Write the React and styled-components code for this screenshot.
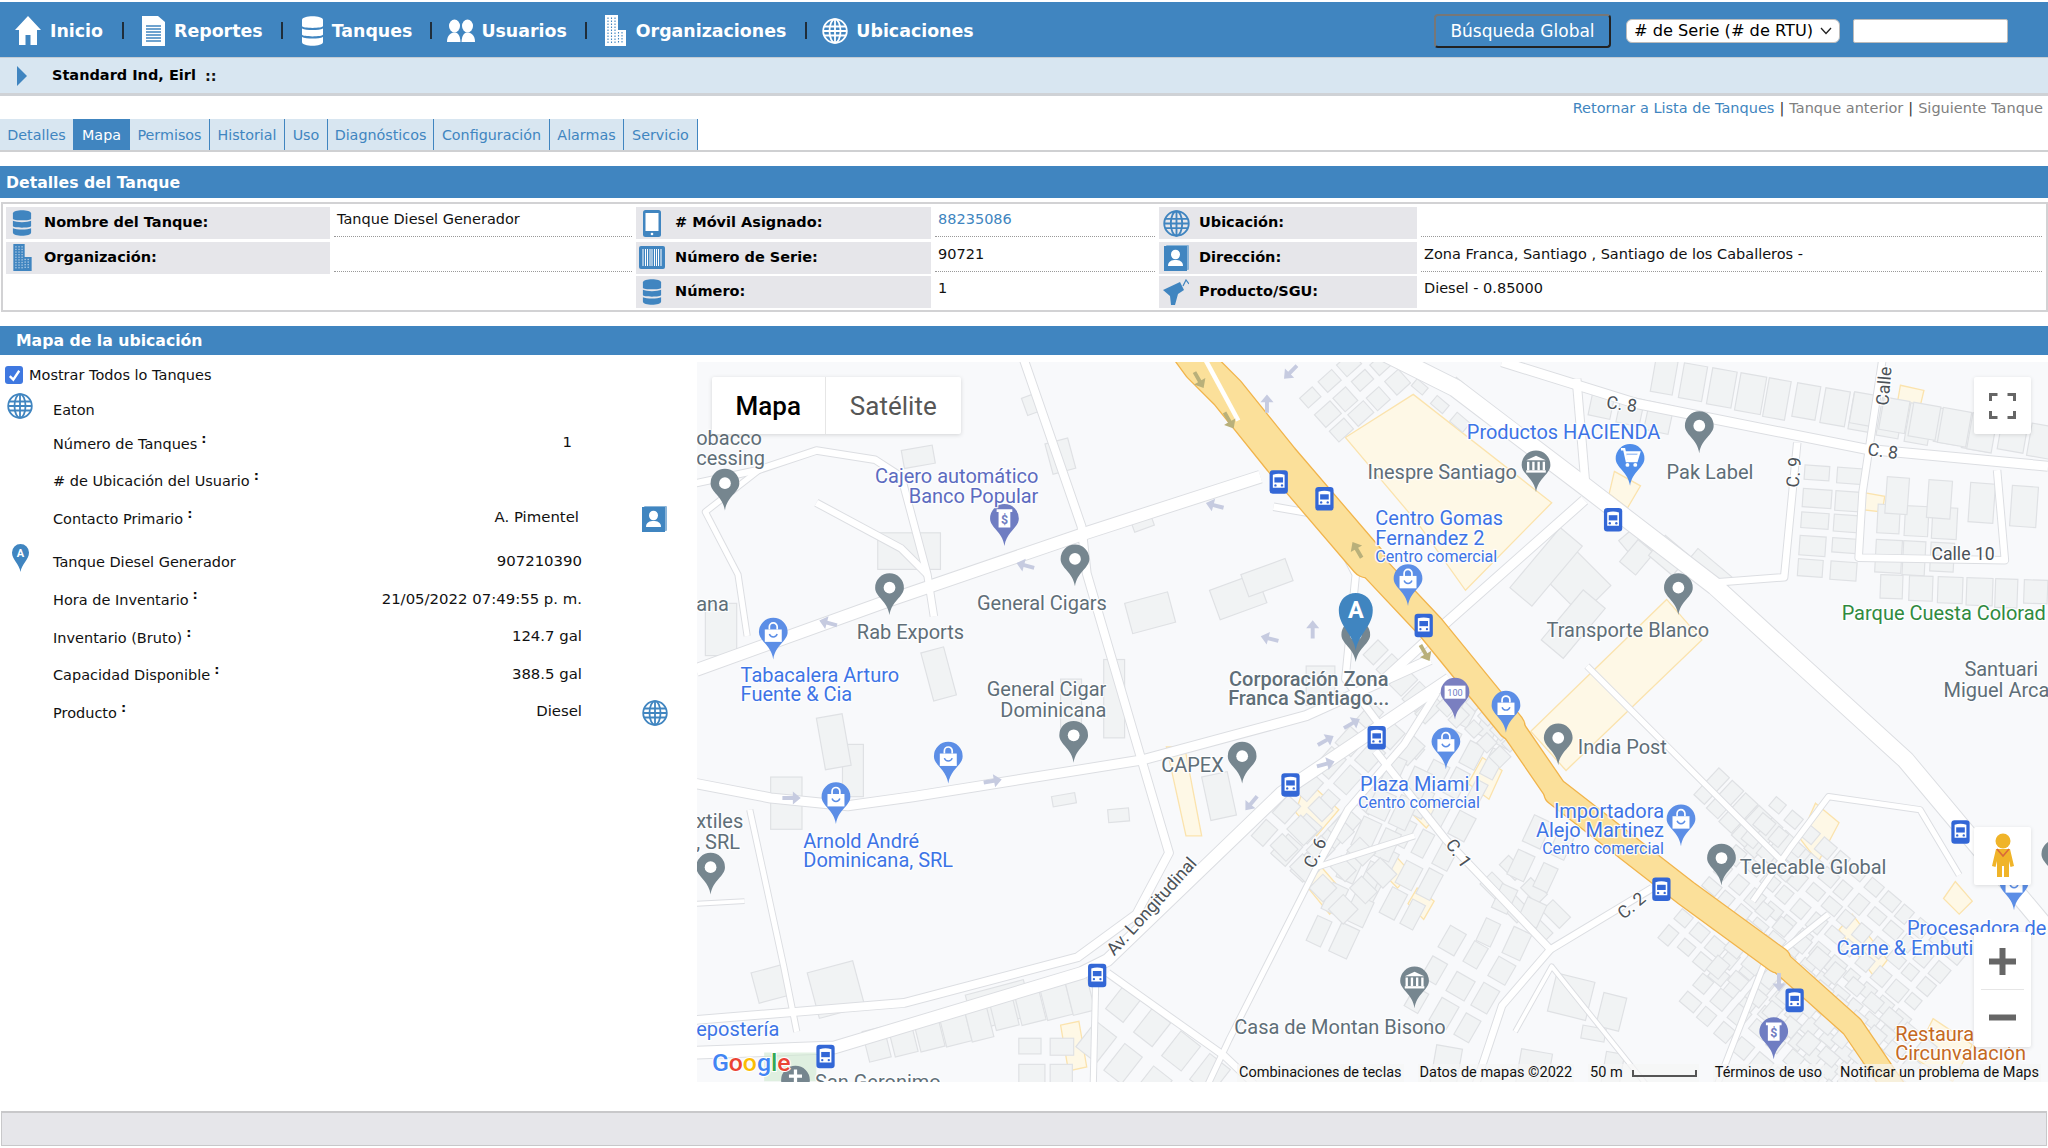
import React from "react";
import styled, { createGlobalStyle } from "styled-components";

const BLUE = "#4085c0";
const PALE = "#d8e6f1";
const GREY_CELL = "#e6e6ea";

const GlobalStyle = createGlobalStyle`
  html, body { margin: 0; padding: 0; background: #fff; overflow: hidden; }
  body { font-family: "DejaVu Sans", Verdana, sans-serif; font-size: 14.5px; color: #111; }
`;

/* ---------- icons ---------- */
const HomeIcon = () => (
  <svg width="26" height="29" viewBox="0 0 26 29" fill="currentColor">
    <path d="M13 0 26 14H22V29H15.5V19H10.5V29H4V14H0Z" />
  </svg>
);
const DocIcon = () => (
  <svg width="23" height="30" viewBox="0 0 23 30">
    <path fill="currentColor" d="M0 0H16L23 6V30H0Z" />
    <path stroke={BLUE} strokeWidth="1.3" d="M4 10H19M4 13H19M4 16H19M4 19H19M4 22H19M4 25H19" />
  </svg>
);
const TankIcon = ({ w = 21, h = 30 }) => (
  <svg width={w} height={h} viewBox="0 0 21 30" fill="currentColor">
    <path d="M0 4C0-1 21-1 21 4V10C21 12.5 0 12.5 0 10Z" />
    <path d="M0 12.5C4 14.5 17 14.5 21 12.5V18.5C21 21 0 21 0 18.5Z" />
    <path d="M0 21C4 23 17 23 21 21V26C21 31 0 31 0 26Z" />
  </svg>
);
const UsersIcon = () => (
  <svg width="28" height="24" viewBox="0 0 28 24" fill="currentColor">
    <ellipse cx="7.5" cy="7" rx="5.5" ry="6.5" />
    <ellipse cx="20.5" cy="7" rx="5.5" ry="6.5" />
    <path d="M0 23C0 16 4 13.5 7.5 13.5S13 16 13.5 23Z" />
    <path d="M14.5 23C15 16 17 13.5 20.5 13.5S28 16 28 23Z" />
  </svg>
);
const BuildingIcon = ({ w = 21, h = 31, ink = BLUE }) => (
  <svg width={w} height={h} viewBox="0 0 21 31">
    <path fill="currentColor" d="M0 0H13V15H21V31H0Z" />
    <path
      stroke={ink}
      strokeWidth="1.1"
      strokeDasharray="1.5 1.5"
      d="M3 2.5V29M6.5 2.5V29M10 2.5V29M13.5 17V29M17 17V29"
    />
  </svg>
);
const GlobeIcon = ({ s = 26 }) => (
  <svg width={s} height={s} viewBox="0 0 26 26" fill="none" stroke="currentColor" strokeWidth="1.8">
    <circle cx="13" cy="13" r="11.8" />
    <ellipse cx="13" cy="13" rx="5.5" ry="11.8" />
    <path d="M13 1V25M2 8.5H24M1 13H25M2 17.5H24" />
  </svg>
);
const PhoneIcon = () => (
  <svg width="18" height="27" viewBox="0 0 18 27">
    <rect width="18" height="27" rx="2.5" fill="currentColor" />
    <rect x="2.5" y="3" width="13" height="18" fill="#fff" />
    <circle cx="9" cy="24" r="1.3" fill="#fff" />
  </svg>
);
const BarcodeIcon = () => (
  <svg width="26" height="23" viewBox="0 0 26 23">
    <rect width="26" height="23" rx="2" fill="currentColor" />
    <path stroke="#fff" strokeWidth="1" d="M4 3V20M6.5 3V20M8.5 3V20M11 3V20M13 3V20M15.5 3V20M17.5 3V20M19.5 3V20M22 3V20" />
  </svg>
);
const ContactIcon = () => (
  <svg width="25" height="26" viewBox="0 0 25 26">
    <rect x="2" width="23" height="25" rx="1" fill="#8ab4d8" />
    <rect y="1" width="23" height="25" fill="currentColor" />
    <ellipse cx="11.5" cy="9.5" rx="4.5" ry="4.8" fill="#fff" />
    <path fill="#fff" d="M4 21C4 16 8 15 11.5 15S19 16 19 21Z" />
  </svg>
);
const PumpIcon = () => (
  <svg width="26" height="26" viewBox="0 0 26 26">
    <path fill="currentColor" d="M0 11 17 3 21 11 15 15 12 26H8L7 17Z" />
    <path fill="none" stroke="currentColor" strokeWidth="1.2" d="M20 7 23 1 26 5" />
  </svg>
);
const ALetterPin = () => (
  <svg width="17" height="28" viewBox="0 0 17 28">
    <path fill="currentColor" d="M8.5 28C7.5 20 0 16 0 8.5A8.5 8.5 0 0 1 17 8.5C17 16 9.5 20 8.5 28Z" />
    <text x="8.5" y="12.5" textAnchor="middle" fontSize="11" fontWeight="700" fontFamily="Roboto" fill="#fff">A</text>
  </svg>
);

/* ---------- page chrome ---------- */
const Page = styled.div`
  width: 2048px;
  height: 1148px;
  overflow: hidden;
  display: flex;
  flex-direction: column;
`;
const TopBar = styled.header`
  height: 55px;
  box-sizing: content-box;
  margin-top: 2px;
  background: ${BLUE};
  border-bottom: 1px solid #c4ccd4;
  display: flex;
  align-items: center;
  justify-content: space-between;
  padding: 0 40px 0 15px;
`;
const NavList = styled.nav`
  display: flex;
  align-items: center;
  color: #fff;
  margin-top: 2px;
`;
const NavItem = styled.a`
  display: flex;
  align-items: center;
  gap: ${p => p.$gap}px;
  font-weight: 700;
  font-size: 17.4px;
  color: #fff;
`;
const NavSep = styled.span`
  width: 2px;
  height: 17px;
  margin: 0 ${p => p.$after}px 0 ${p => p.$before}px;
  background: #1f2d3a;
`;
const SearchBox = styled.div`
  display: flex;
  align-items: center;
  margin-top: 2px;
`;
const SearchButton = styled.button`
  width: 177px;
  height: 34px;
  margin-right: 15px;
  box-sizing: border-box;
  background: ${BLUE};
  color: #fff;
  border-radius: 4px;
  border: 2px solid;
  border-color: #777 #222 #222 #777;
  font: 17px "DejaVu Sans", sans-serif;
  padding: 0;
`;
const SearchSelect = styled.div`
  width: 214px;
  height: 24px;
  box-sizing: border-box;
  margin-right: 13px;
  padding: 0 7px;
  background: #fff;
  border: 1px solid #bbb;
  border-radius: 6px;
  display: flex;
  align-items: center;
  justify-content: space-between;
  color: #000;
  font-size: 16.2px;
  white-space: nowrap;
`;
const SearchInput = styled.input`
  width: 155px;
  height: 24px;
  box-sizing: border-box;
  background: #fff;
  border: 1px solid #bbb;
  border-radius: 2px;
`;
const SubBar = styled.div`
  height: 35px;
  background: ${PALE};
  border-bottom: 3px solid #cfd2d6;
  display: flex;
  align-items: center;
  padding-left: 17px;
  font-weight: 700;
`;
const Triangle = styled.span`
  width: 0;
  height: 0;
  margin-right: 25px;
  border-left: 10px solid ${BLUE};
  border-top: 10px solid transparent;
  border-bottom: 10px solid transparent;
`;
const Crumb = styled.span`
  color: #000;
  margin-top: -1px;
`;
const CrumbDots = styled.span`
  margin-left: 9px;
`;
const LinkRow = styled.div`
  height: 23px;
  box-sizing: border-box;
  display: flex;
  align-items: flex-end;
  justify-content: flex-end;
  padding: 0 5px 3px 0;
  color: #333;
`;
const NavLink = styled.a`
  color: ${p => (p.$muted ? "#808080" : BLUE)};
  margin: 0 5px;
  &:last-child { margin-right: 0; }
`;
const TabBar = styled.div`
  height: 31px;
  display: flex;
  border-bottom: 2px solid #cfd0d2;
`;
const Tab = styled.a`
  box-sizing: border-box;
  width: ${p => p.$w}px;
  display: flex;
  align-items: center;
  justify-content: center;
  font-size: 14.3px;
  background: ${p => (p.$active ? BLUE : PALE)};
  color: ${p => (p.$active ? "#fff" : BLUE)};
  border-right: 1px solid ${BLUE};
`;
const SectionBar = styled.h2`
  margin: ${p => p.$top}px 0 0;
  height: ${p => p.$h}px;
  box-sizing: border-box;
  background: ${BLUE};
  color: #fff;
  font-size: 15.7px;
  font-weight: 700;
  display: flex;
  align-items: center;
  padding-left: ${p => p.$pad}px;
`;
const DetailPanel = styled.section`
  margin: 4px 0 0 1px;
  height: 110px;
  box-sizing: border-box;
  border: 2px solid #d2d2d4;
  padding: 3px 4px 3px 3px;
  display: grid;
  grid-template-columns: 324px 298px 295px 220px 258px 1fr;
  grid-auto-rows: 32px;
  column-gap: 4px;
  row-gap: 2.5px;
`;
const FieldLabel = styled.div`
  background: ${GREY_CELL};
  display: flex;
  align-items: center;
  font-weight: 700;
  color: #000;
  padding-left: ${p => p.$pad}px;
  padding-bottom: 2px;
`;
const FieldIcon = styled.span`
  width: ${p => p.$w}px;
  color: ${BLUE};
  display: flex;
  align-items: center;
  justify-content: center;
  margin-right: ${p => p.$gap}px;
  margin-bottom: -2px;
`;
const FieldValue = styled.div`
  padding: 4px 0 0 3px;
  color: ${p => (p.$link ? BLUE : "#111")};
  border-bottom: ${p => (p.$plain ? "none" : "1px dotted #999")};
  margin-bottom: ${p => (p.$plain ? 0 : 2)}px;
`;
const Blank = styled.div``;

/* ---------- lower area ---------- */
const Body = styled.div`
  display: flex;
  margin-top: 7px;
  height: 720px;
`;
const SidePanel = styled.aside`
  width: 697px;
  flex: none;
  color: #111;
`;
const ShowAll = styled.label`
  height: 33px;
  display: flex;
  align-items: flex-start;
  padding: 4px 0 0 5px;
  box-sizing: border-box;
  gap: 6px;
  line-height: 18px;
`;
const CheckBox = styled.span`
  width: 18px;
  height: 18px;
  border-radius: 3px;
  background: #3f78e0;
  display: flex;
  align-items: center;
  justify-content: center;
`;
const InfoRow = styled.div`
  height: ${p => p.$h || 37.5}px;
  box-sizing: border-box;
  padding-top: ${p => p.$push || 0}px;
  display: grid;
  grid-template-columns: 53px auto 1fr 115px;
  align-items: center;
`;
const LeadIcon = styled.span`
  color: ${BLUE};
  display: flex;
  justify-content: ${p => (p.$center ? "center" : "flex-start")};
  padding-left: ${p => (p.$center ? 0 : 7)}px;
  width: ${p => (p.$center ? 41 : 46)}px;
  margin-top: ${p => p.$up || 0}px;
`;
const InfoName = styled.span`
  white-space: nowrap;
`;
const Colon = styled.sup`
  font-size: 13px;
  margin-left: 4px;
  font-weight: 700;
  line-height: 0;
`;
const InfoValue = styled.span`
  text-align: right;
  font-size: 14.9px;
  padding-right: ${p => p.$inset || 0}px;
  margin-top: -3px;
  white-space: nowrap;
`;
const TrailIcon = styled.span`
  color: ${BLUE};
  padding-left: 60px;
  display: flex;
`;

const MapBox = styled.div`
  position: relative;
  flex: 1;
  height: 720px;
  overflow: hidden;
  background: #f8f9fb;
`;
const MapCanvas = styled.svg`
  display: block;
  width: 100%;
  height: 100%;
`;
const MapTypeControl = styled.div`
  position: absolute;
  left: 15px;
  top: 15px;
  width: 249px;
  height: 57px;
  background: #fff;
  display: flex;
  box-shadow: 0 1px 4px rgba(0, 0, 0, .15);
  border-radius: 2px;
  font-family: Roboto, sans-serif;
  font-size: 26px;
`;
const MapType = styled.span`
  display: flex;
  align-items: center;
  justify-content: center;
  width: ${p => p.$w}px;
  font-weight: ${p => (p.$active ? 500 : 400)};
  color: ${p => (p.$active ? "#000" : "#565656")};
  border-right: ${p => (p.$active ? "1px solid #e6e6e6" : "none")};
`;
const MapButton = styled.div`
  position: absolute;
  right: 17px;
  top: ${p => p.$top}px;
  width: 57px;
  height: ${p => p.$h}px;
  background: #fff;
  display: flex;
  flex-direction: column;
  align-items: center;
  justify-content: center;
  box-shadow: 0 1px 4px rgba(0, 0, 0, .12);
  border-radius: 2px;
  color: #666;
`;
const ZoomDivider = styled.span`
  width: 43px;
  height: 1px;
  background: #e6e6e6;
  margin: 14px 0;
`;
const Attribution = styled.div`
  position: absolute;
  right: 0;
  bottom: 0;
  height: 20px;
  display: flex;
  align-items: center;
  gap: 14px;
  padding: 2px 7px 0 0;
  box-sizing: border-box;
  font-family: Roboto, sans-serif;
  font-size: 14.5px;
  color: #111;
  white-space: nowrap;
`;
const AttrItem = styled.span`
  background: rgba(245, 245, 245, .72);
  padding: 0 2px;
  line-height: 18px;
`;
const ScaleBar = styled.span`
  display: flex;
  align-items: center;
  gap: 9px;
  background: rgba(245, 245, 245, .72);
  line-height: 18px;
  padding: 0 2px;
`;
const ScaleLine = styled.span`
  width: 65px;
  height: 7px;
  box-sizing: border-box;
  border: 2px solid #555;
  border-top: none;
`;
const Footer = styled.footer`
  margin: 29px 1px 0;
  height: 35px;
  box-sizing: border-box;
  background: ${GREY_CELL};
  border: 1px solid #c8c8ca;
  border-top-width: 2px;
`;

/* ---------- map pieces (viewBox uses the 1568-wide picture's coordinates) ---------- */
const TONES = { grey: "#5f6e78", blue: "#3d74e6", purple: "#5c6bc0", green: "#2f8a3e", orange: "#c5691f", road: "#4b5157" };

const PlaceText = styled.text`
  font-family: Roboto, sans-serif;
  font-size: ${p => p.$size || 15.3}px;
  font-weight: ${p => p.$weight || 400};
  fill: ${p => TONES[p.$tone]};
  stroke: #fff;
  stroke-width: 2px;
  stroke-opacity: .85;
  paint-order: stroke;
  stroke-linejoin: round;
`;

const PIN_PATH = "M0 0C-1.5-11-11-14-11-21A11 11 0 1 1 11-21C11-14 1.5-11 0 0Z";

const Pin = ({ x, y, color, children }) => (
  <g transform={`translate(${x} ${y})`}>
    <path d={PIN_PATH} fill={color} />
    {children}
  </g>
);
const GreyPin = ({ x, y }) => (
  <Pin x={x} y={y} color="#76868f"><circle cy="-21" r="4.5" fill="#fff" /></Pin>
);
const BagPin = ({ x, y }) => (
  <Pin x={x} y={y} color="#5c8ee6">
    <path d="M-6.5-23H6.5V-13.5H-6.5Z" fill="#fff" />
    <path d="M-3-23V-25A3 3 0 0 1 3-25V-23" fill="none" stroke="#fff" strokeWidth="1.3" />
    <path d="M-3-19.5C-2-16.5 2-16.5 3-19.5" fill="none" stroke="#5c8ee6" strokeWidth="1.1" />
  </Pin>
);
const CartPin = ({ x, y }) => (
  <Pin x={x} y={y} color="#4f8dea">
    <path d="M-7-28H-4.5L-2.5-19H5L7-25.5H-3.5" fill="none" stroke="#fff" strokeWidth="1.8" />
    <path d="M-3-24H6.5L5-19.5H-2Z" fill="#fff" />
    <circle cx="-2" cy="-16" r="1.5" fill="#fff" />
    <circle cx="4" cy="-16" r="1.5" fill="#fff" />
  </Pin>
);
const BankPin = ({ x, y }) => (
  <Pin x={x} y={y} color="#6f7dc2">
    <path d="M-6-28H6V-26H4.5V-14H-4.5V-26H-6Z" fill="#fff" />
    <text y="-17" textAnchor="middle" fontSize="9.5" fontWeight="700" fontFamily="Roboto" fill="#6f7dc2">$</text>
  </Pin>
);
const CashPin = ({ x, y }) => (
  <Pin x={x} y={y} color="#7a7fc0">
    <rect x="-8" y="-26" width="16" height="10" fill="#fff" />
    <text y="-18" textAnchor="middle" fontSize="7" fontFamily="Roboto" fill="#6f7dc2">100</text>
  </Pin>
);
const HallPin = ({ x, y }) => (
  <Pin x={x} y={y} color="#76868f">
    <path d="M0-28 7.5-24.5H-7.5Z" fill="#fff" />
    <path d="M-6-23.5V-17M-2-23.5V-17M2-23.5V-17M6-23.5V-17" stroke="#fff" strokeWidth="1.8" />
    <path d="M-7.5-16H7.5" stroke="#fff" strokeWidth="1.8" />
  </Pin>
);
const BusStop = ({ x, y }) => (
  <g transform={`translate(${x} ${y})`}>
    <rect x="-7" y="-9" width="14" height="18" rx="2.5" fill="#3367d6" />
    <path d="M-4.5-5.5Q0-7 4.5-5.5V4.5H-4.5Z" fill="#fff" />
    <rect x="-3.3" y="-3.5" width="6.6" height="4" fill="#3367d6" />
    <circle cx="-2.5" cy="2.7" r=".9" fill="#3367d6" />
    <circle cx="2.5" cy="2.7" r=".9" fill="#3367d6" />
  </g>
);
const Arrow = ({ x, y, rot, color = "#c6cbe0" }) => (
  <path
    transform={`translate(${x} ${y}) rotate(${rot})`}
    d="M-7-1.5H1V-5L7 0 1 5V1.5H-7Z"
    fill={color}
  />
);

const House = ({ x, y, w, h, rot }) => (
  <rect x={x} y={y} width={w} height={h} transform={`rotate(${rot} ${x} ${y})`} fill="#f1f3f4" stroke="#dfe1e4" strokeWidth=".9" />
);
const Block = ({ x, y, rot, cols, rows, w, h, gap = 3 }) => {
  const items = [];
  for (let r = 0; r < rows; r++) {
    for (let c = 0; c < cols; c++) {
      // a little size variation so that a block does not read as a perfect grid
      const dw = ((r * 7 + c * 5) % 4) - 1;
      const dh = ((r * 3 + c * 11) % 5) - 2;
      items.push(
        <rect key={`${r}-${c}`} x={c * (w + gap)} y={r * (h + gap)} width={w + dw} height={h + dh} fill="#f1f3f4" stroke="#dfe1e4" strokeWidth=".9" />
      );
    }
  }
  return <g transform={`translate(${x} ${y}) rotate(${rot})`}>{items}</g>;
};

const ROADS = [
  { w: 9, d: "M965 365 832 408 680 460 533 513" },
  { w: 6, d: "M782 270 828 403 832 439 874 582 895 653 870 700 825 733 692 768 533 781" },
  { w: 7, d: "M533 600 590 611 649 617 699 610 874 582 1000 548 1095 505" },
  { w: 9, d: "M1110 520 981 607 848 735 828 745 639 802 533 806" },
  { w: 13, d: "M1060 270 1114 297 1214 373 1313 449 1459 582 1568 712" },
  { w: 7, d: "M1150 277 1253 309 1429 344 1568 357" },
  { w: 5, d: "M1442 270 1426 377 1423 427 1535 429 1529 360" },
  { w: 5, d: "M1376 339 1366 442 1313 446" },
  { w: 7, d: "M1213 383 1107 477 1060 520" },
  { w: 6, d: "M1207 290 1214 373" },
  { w: 5, d: "M1053 575 1107 643 1187 727 1265 680" },
  { w: 5, d: "M1187 727 1150 770 1130 830" },
  { w: 4, d: "M1083 640 1008 664 941 796 925 830" },
  { w: 5, d: "M848 745 938 809 960 830" },
  { w: 4, d: "M839 745 837 830" },
  { w: 5, d: "M1100 530 1075 570 1032 620 1008 664" },
  { w: 5, d: "M533 370 580 360 625 345 670 352 690 365 710 440 715 472" },
  { w: 5, d: "M625 385 690 420 710 440" },
  { w: 4, d: "M581 360 540 392 565 440 572 487" },
  { w: 4, d: "M1215 510 1280 575 1375 670" },
  { w: 5, d: "M975 388 1015 395 1038 440 1030 520 1060 560" },
  { w: 4, d: "M574 620 600 740 610 790" },
  { w: 3, d: "M533 692 570 690" },
  { w: 4, d: "M1342 690 1370 650 1400 610 1470 620 1500 670" },
  { w: 4, d: "M1315 830 1350 740 1400 700" },
  { w: 3, d: "M1160 790 1188 740 1260 830" },
];

const PLACES = [
  { x: 533, y: 341, t: "obacco", tone: "grey" },
  { x: 533, y: 356, t: "cessing", tone: "grey" },
  { x: 795, y: 370, t: "Cajero automático", tone: "purple", a: "end" },
  { x: 795, y: 385, t: "Banco Popular", tone: "purple", a: "end" },
  { x: 533, y: 468, t: "ana", tone: "grey" },
  { x: 748, y: 467, t: "General Cigars", tone: "grey" },
  { x: 656, y: 489, t: "Rab Exports", tone: "grey" },
  { x: 567, y: 522, t: "Tabacalera Arturo", tone: "blue" },
  { x: 567, y: 537, t: "Fuente & Cia", tone: "blue" },
  { x: 847, y: 533, t: "General Cigar", tone: "grey", a: "end" },
  { x: 847, y: 549, t: "Dominicana", tone: "grey", a: "end" },
  { x: 1002, y: 525, t: "Corporación Zona", tone: "grey", a: "middle", weight: 500 },
  { x: 1002, y: 540, t: "Franca Santiago...", tone: "grey", a: "middle", weight: 500 },
  { x: 889, y: 591, t: "CAPEX", tone: "grey" },
  { x: 615, y: 649, t: "Arnold André", tone: "blue" },
  { x: 615, y: 664, t: "Dominicana, SRL", tone: "blue" },
  { x: 533, y: 634, t: "xtiles", tone: "grey" },
  { x: 533, y: 650, t: ", SRL", tone: "grey" },
  { x: 1123, y: 336, t: "Productos HACIENDA", tone: "blue" },
  { x: 1047, y: 367, t: "Inespre Santiago", tone: "grey" },
  { x: 1276, y: 367, t: "Pak Label", tone: "grey" },
  { x: 1053, y: 402, t: "Centro Gomas", tone: "blue" },
  { x: 1053, y: 417, t: "Fernandez 2", tone: "blue" },
  { x: 1053, y: 430, t: "Centro comercial", tone: "blue", size: 12.3 },
  { x: 1184, y: 488, t: "Transporte Blanco", tone: "grey" },
  { x: 1410, y: 475, t: "Parque Cuesta Colorad", tone: "green" },
  { x: 1504, y: 518, t: "Santuari", tone: "grey" },
  { x: 1488, y: 534, t: "Miguel Arca", tone: "grey" },
  { x: 1208, y: 577, t: "India Post", tone: "grey" },
  { x: 1133, y: 606, t: "Plaza Miami I", tone: "blue", a: "end" },
  { x: 1133, y: 619, t: "Centro comercial", tone: "blue", a: "end", size: 12.3 },
  { x: 1274, y: 626, t: "Importadora", tone: "blue", a: "end" },
  { x: 1274, y: 641, t: "Alejo Martinez", tone: "blue", a: "end" },
  { x: 1274, y: 654, t: "Centro comercial", tone: "blue", a: "end", size: 12.3 },
  { x: 1332, y: 669, t: "Telecable Global", tone: "grey" },
  { x: 1460, y: 716, t: "Procesadora de", tone: "blue" },
  { x: 1406, y: 731, t: "Carne & Embuti", tone: "blue" },
  { x: 1451, y: 797, t: "Restaura", tone: "orange" },
  { x: 1451, y: 812, t: "Circunvalación", tone: "orange" },
  { x: 945, y: 792, t: "Casa de Montan Bisono", tone: "grey" },
  { x: 533, y: 793, t: "epostería", tone: "blue" },
  { x: 624, y: 834, t: "San Geronimo", tone: "grey" },
];

const STREETS = [
  { x: 885, y: 697, r: -48, t: "Av. Longitudinal" },
  { x: 1241, y: 314, r: 8, t: "C. 8" },
  { x: 1441, y: 350, r: 8, t: "C. 8" },
  { x: 1447, y: 296, r: -85, t: "Calle" },
  { x: 1378, y: 362, r: -85, t: "C. 9" },
  { x: 1503, y: 429, r: 0, t: "Calle 10" },
  { x: 1011, y: 655, r: -65, t: "C. 6" },
  { x: 1113, y: 656, r: 55, t: "C. 1" },
  { x: 1252, y: 697, r: -40, t: "C. 2" },
];

const HOUSES = [
  { x: 672, y: 408, w: 48, h: 28, rot: 0 }, { x: 540, y: 462, w: 24, h: 40, rot: 0 },
  { x: 861, y: 462, w: 34, h: 24, rot: -15 }, { x: 926, y: 452, w: 38, h: 24, rot: -20 },
  { x: 950, y: 440, w: 36, h: 18, rot: -20 }, { x: 1000, y: 510, w: 22, h: 30, rot: 0 },
  { x: 590, y: 595, w: 24, h: 40, rot: 0 }, { x: 705, y: 500, w: 18, h: 38, rot: -15 },
  { x: 645, y: 570, w: 16, h: 40, rot: 0 }, { x: 812, y: 520, w: 16, h: 44, rot: 0 },
  { x: 845, y: 505, w: 16, h: 60, rot: 0 }, { x: 618, y: 745, w: 36, h: 36, rot: -15 },
  { x: 575, y: 745, w: 24, h: 24, rot: -15 }, { x: 739, y: 762, w: 46, h: 28, rot: -15 },
  { x: 920, y: 595, w: 20, h: 34, rot: -12 }, { x: 848, y: 620, w: 16, h: 10, rot: -5 },
  { x: 805, y: 610, w: 18, h: 8, rot: -10 }, { x: 1080, y: 565, w: 14, h: 10, rot: 40 },
  { x: 1205, y: 420, w: 40, h: 32, rot: 45 }, { x: 1156, y: 450, w: 60, h: 22, rot: -50 },
  { x: 1180, y: 490, w: 50, h: 22, rot: -50 }, { x: 1250, y: 405, w: 24, h: 14, rot: 50 },
  { x: 1240, y: 430, w: 22, h: 16, rot: -50 }, { x: 1275, y: 410, w: 24, h: 20, rot: 40 },
  { x: 1300, y: 420, w: 36, h: 16, rot: 40 }, { x: 1115, y: 289, w: 32, h: 10, rot: 40 },
  { x: 1192, y: 745, w: 30, h: 30, rot: 14 }, { x: 1228, y: 760, w: 18, h: 26, rot: 14 },
  { x: 1212, y: 785, w: 18, h: 10, rot: 10 }, { x: 1165, y: 803, w: 24, h: 30, rot: 10 },
  { x: 1230, y: 805, w: 14, h: 26, rot: 10 }, { x: 1100, y: 800, w: 20, h: 30, rot: 10 },
  { x: 690, y: 345, w: 24, h: 14, rot: -10 }, { x: 866, y: 400, w: 16, h: 8, rot: -20 },
  { x: 782, y: 305, w: 14, h: 14, rot: -20 }, { x: 800, y: 340, w: 18, h: 24, rot: -15 },
  { x: 625, y: 550, w: 20, h: 40, rot: -10 },
];

const BLOCKS = [
  { x: 1268, y: 274, rot: 10, cols: 12, rows: 1, w: 18, h: 28, gap: 4 },
  { x: 1220, y: 298, rot: 12, cols: 3, rows: 1, w: 18, h: 22, gap: 4 },
  { x: 1420, y: 300, rot: 10, cols: 7, rows: 1, w: 20, h: 26, gap: 3 },
  { x: 1382, y: 356, rot: 4, cols: 2, rows: 5, w: 20, h: 13, gap: 5 },
  { x: 1438, y: 386, rot: 3, cols: 3, rows: 2, w: 18, h: 24, gap: 3 },
  { x: 1440, y: 440, rot: 2, cols: 6, rows: 1, w: 18, h: 20, gap: 4 },
  { x: 1445, y: 365, rot: 4, cols: 4, rows: 1, w: 18, h: 30, gap: 14 },
  { x: 1316, y: 588, rot: 43, cols: 7, rows: 1, w: 12, h: 30, gap: 2 },
  { x: 1360, y: 610, rot: 40, cols: 12, rows: 9, w: 11, h: 11, gap: 5 },
  { x: 1350, y: 690, rot: 40, cols: 10, rows: 6, w: 12, h: 12, gap: 6 },
  { x: 1040, y: 690, rot: -62, cols: 7, rows: 3, w: 20, h: 12, gap: 6 },
  { x: 958, y: 640, rot: -48, cols: 6, rows: 3, w: 18, h: 14, gap: 6 },
  { x: 1075, y: 770, rot: -60, cols: 3, rows: 3, w: 18, h: 14, gap: 8 },
  { x: 1000, y: 720, rot: -65, cols: 6, rows: 2, w: 22, h: 14, gap: 5 },
  { x: 1010, y: 610, rot: 45, cols: 4, rows: 3, w: 16, h: 14, gap: 6 },
  { x: 660, y: 790, rot: -14, cols: 9, rows: 1, w: 18, h: 26, gap: 2 },
  { x: 780, y: 795, rot: 0, cols: 2, rows: 2, w: 18, h: 14, gap: 6 },
  { x: 860, y: 755, rot: 38, cols: 4, rows: 2, w: 18, h: 24, gap: 10 },
  { x: 1155, y: 655, rot: 45, cols: 3, rows: 2, w: 18, h: 12, gap: 6 },
  { x: 1130, y: 720, rot: -65, cols: 4, rows: 2, w: 20, h: 14, gap: 8 },
  { x: 1055, y: 490, rot: 45, cols: 5, rows: 1, w: 12, h: 18, gap: 3 },
  { x: 1120, y: 520, rot: 45, cols: 5, rows: 2, w: 10, h: 12, gap: 4 },
  { x: 995, y: 305, rot: -42, cols: 4, rows: 3, w: 14, h: 12, gap: 5 },
  { x: 1085, y: 290, rot: 40, cols: 3, rows: 1, w: 12, h: 9, gap: 8 },
];

const YELLOW_LOTS = [
  "1030,335 1082,302 1188,385 1122,452 1085,400",
  "1276,459 1303,490 1199,590 1172,560",
  "1455,295 1473,299 1468,320 1451,318",
  "1426,377 1443,380 1441,392 1424,390",
  "1236,361 1256,372 1246,389 1232,378",
  "893,572 907,572 920,640 908,640",
  "1000,597 1025,620 1008,640 992,622",
  "1090,605 1105,618 1092,634 1078,620",
  "1390,615 1408,630 1392,660 1378,642",
  "1418,700 1445,735 1435,748 1408,712",
  "1010,662 1030,685 1018,700 1000,678",
  "1068,655 1080,668 1070,680 1058,668",
  "1497,675 1510,690 1500,700 1488,688",
  "812,785 826,782 832,817 818,820",
  "1085,680 1098,690 1090,704 1078,692",
  "1135,580 1150,590 1140,612 1124,600",
  "1345,714 1355,718 1346,742 1336,738",
  "1480,780 1510,800 1495,828 1465,810",
];

const HIGHWAY = [
  { w: 26, d: "M908 265 919 280 940 301 981 352 1047 429" },
  { w: 20, d: "M1047 429 1095 480 1157 556" },
  { w: 17, d: "M1157 556 1192 607" },
  { w: 19, d: "M1192 607 1291 684 1361 735" },
  { w: 16, d: "M1361 735 1418 786 1446 827 1455 840" },
];

const GREY_PINS = [[555, 391], [681, 471], [823, 449], [1038, 507], [822, 584], [951, 600], [1193, 586], [1301, 347], [1285, 471], [1318, 678], [544, 685], [1574, 675]];
const BAG_PINS = [[592, 505], [640, 631], [726, 600], [1078, 464], [1153, 561], [1107, 589], [1287, 648], [1542, 697]];
const BUS_STOPS = [[979, 369], [1014, 382], [1235, 398], [1090, 479], [1054, 565], [988, 601], [840, 747], [632, 809], [1272, 681], [1374, 766], [1501, 637]];
const ARROWS = [
  [785, 433, 195], [634, 477, 195], [930, 387, 195], [972, 489, 195], [1005, 482, 270],
  [988, 285, 135], [970, 309, 270], [606, 611, 0], [760, 598, -10], [1015, 585, -15],
  [958, 615, 130], [1035, 554, -30], [1015, 567, -30], [1362, 752, 90],
];
const HIGHWAY_ARROWS = [[918, 291, 60], [941, 322, 60], [1039, 421, 240], [1091, 500, 60]];

const MapArt = () => (
  <MapCanvas viewBox="533.6 277.2 1034.4 551.3" preserveAspectRatio="none">
    <rect x="533" y="277" width="1036" height="552" fill="#f8f9fb" />
    {YELLOW_LOTS.map(p => <polygon key={p} points={p} fill="#fef8e6" stroke="#fbe3ad" strokeWidth="1" />)}
    {HOUSES.map((h, i) => <House key={i} {...h} />)}
    {BLOCKS.map((b, i) => <Block key={i} {...b} />)}

    {ROADS.map(r => <path key={`e${r.d}`} d={r.d} fill="none" stroke="#dcdee2" strokeWidth={r.w + 1.5} strokeLinejoin="round" />)}
    {ROADS.map(r => <path key={r.d} d={r.d} fill="none" stroke="#fff" strokeWidth={r.w} strokeLinejoin="round" />)}

    {HIGHWAY.map(h => <path key={`o${h.d}`} d={h.d} fill="none" stroke="#f1b44c" strokeWidth={h.w + 2} strokeLinecap="round" strokeLinejoin="round" />)}
    {HIGHWAY.map(h => <path key={h.d} d={h.d} fill="none" stroke="#fbe09a" strokeWidth={h.w} strokeLinecap="round" strokeLinejoin="round" />)}
    <path d="M921 272 948 322" fill="none" stroke="#fff" strokeWidth="3.5" />
    {HIGHWAY_ARROWS.map(([x, y, r]) => <Arrow key={`${x}${y}`} x={x} y={y} rot={r} color="#b9b07a" />)}
    {ARROWS.map(([x, y, r]) => <Arrow key={`${x}${y}`} x={x} y={y} rot={r} />)}

    <path d="M585 828V806H625V828Z" fill="#cfe8cf" opacity=".6" />
    <Pin x={609} y={848} color="#76868f">
      <path d="M0-29V-15M-5-24H5" stroke="#fff" strokeWidth="2.5" />
    </Pin>

    {GREY_PINS.map(([x, y]) => <GreyPin key={`${x}`} x={x} y={y} />)}
    {BAG_PINS.map(([x, y]) => <BagPin key={`${x}`} x={x} y={y} />)}
    <CartPin x={1248} y={372} />
    <BankPin x={769} y={418} />
    <BankPin x={1358} y={811} />
    <CashPin x={1114} y={551} />
    <HallPin x={1176} y={377} />
    <HallPin x={1083} y={772} />
    {BUS_STOPS.map(([x, y]) => <BusStop key={`${x}`} x={x} y={y} />)}

    <g transform="translate(1038 498)">
      <path d="M0 0C-2-13-13-18-13-31A13 13 0 1 1 13-31C13-18 2-13 0 0Z" fill={BLUE} />
      <text y="-25" textAnchor="middle" fontSize="18" fontWeight="700" fontFamily="Roboto" fill="#fff">A</text>
    </g>

    {PLACES.map(p => (
      <PlaceText key={`${p.t}${p.y}`} x={p.x} y={p.y} textAnchor={p.a || "start"} $tone={p.tone} $size={p.size} $weight={p.weight}>{p.t}</PlaceText>
    ))}
    {STREETS.map(s => (
      <PlaceText key={`${s.t}${s.x}`} $tone="road" $size={13.5} textAnchor="middle" transform={`translate(${s.x} ${s.y}) rotate(${s.r})`}>{s.t}</PlaceText>
    ))}

    <text x="545" y="820" fontFamily="Roboto, sans-serif" fontSize="19" fontWeight="500" stroke="#fff" strokeWidth="1.5" paintOrder="stroke">
      <tspan fill="#4285f4">G</tspan><tspan fill="#ea4335">o</tspan><tspan fill="#fbbc05">o</tspan><tspan fill="#4285f4">g</tspan><tspan fill="#34a853">l</tspan><tspan fill="#ea4335">e</tspan>
    </text>
  </MapCanvas>
);

const NAV = [
  { label: "Inicio", icon: <HomeIcon />, gap: 9, sep: [19, 18] },
  { label: "Reportes", icon: <DocIcon />, gap: 9, sep: [18, 19] },
  { label: "Tanques", icon: <TankIcon />, gap: 9, sep: [18, 15] },
  { label: "Usuarios", icon: <UsersIcon />, gap: 6, sep: [18, 18] },
  { label: "Organizaciones", icon: <BuildingIcon ink={BLUE} />, gap: 10, sep: [19, 15] },
  { label: "Ubicaciones", icon: <GlobeIcon />, gap: 8 },
];

const TABS = [
  ["Detalles", 74], ["Mapa", 56], ["Permisos", 80], ["Historial", 75], ["Uso", 43],
  ["Diagnósticos", 106], ["Configuración", 116], ["Alarmas", 74], ["Servicio", 74],
];

const InfoLine = ({ name, value, inset, lead, up, center, trail, h, push }) => (
  <InfoRow $h={h} $push={push}>
    <LeadIcon $up={up} $center={center}>{lead}</LeadIcon>
    <InfoName>{name}</InfoName>
    <InfoValue $inset={inset}>{value}</InfoValue>
    <TrailIcon>{trail}</TrailIcon>
  </InfoRow>
);
const Named = ({ children }) => <>{children}<Colon>:</Colon></>;

export default function App() {
  return (
    <Page>
      <GlobalStyle />
      <TopBar>
        <NavList>
          {NAV.map(n => (
            <React.Fragment key={n.label}>
              <NavItem $gap={n.gap}>{n.icon}{n.label}</NavItem>
              {n.sep && <NavSep $before={n.sep[0]} $after={n.sep[1]} />}
            </React.Fragment>
          ))}
        </NavList>
        <SearchBox>
          <SearchButton>Búsqueda Global</SearchButton>
          <SearchSelect>
            # de Serie (# de RTU)
            <svg width="12" height="8" viewBox="0 0 12 8" fill="none" stroke="#222" strokeWidth="1.3"><path d="M1 1 6 6.5 11 1" /></svg>
          </SearchSelect>
          <SearchInput />
        </SearchBox>
      </TopBar>
      <SubBar>
        <Triangle />
        <Crumb>Standard Ind, Eirl</Crumb>
        <CrumbDots>::</CrumbDots>
      </SubBar>

      <LinkRow>
        <NavLink>Retornar a Lista de Tanques</NavLink>|
        <NavLink $muted>Tanque anterior</NavLink>|
        <NavLink $muted>Siguiente Tanque</NavLink>
      </LinkRow>
      <TabBar>
        {TABS.map(([label, w]) => <Tab key={label} $w={w} $active={label === "Mapa"}>{label}</Tab>)}
      </TabBar>

      <SectionBar $top={14} $h={32} $pad={6}>Detalles del Tanque</SectionBar>
      <DetailPanel>
        <FieldLabel $pad={5}><FieldIcon $w={22} $gap={11}><TankIcon w={20} h={26} /></FieldIcon>Nombre del Tanque:</FieldLabel>
        <FieldValue>Tanque Diesel Generador</FieldValue>
        <FieldLabel $pad={3}><FieldIcon $w={26} $gap={10}><PhoneIcon /></FieldIcon># Móvil Asignado:</FieldLabel>
        <FieldValue $link>88235086</FieldValue>
        <FieldLabel $pad={3}><FieldIcon $w={28} $gap={9}><GlobeIcon s={27} /></FieldIcon>Ubicación:</FieldLabel>
        <FieldValue />

        <FieldLabel $pad={5}><FieldIcon $w={22} $gap={11}><BuildingIcon w={21} h={27} ink="#dce8f3" /></FieldIcon>Organización:</FieldLabel>
        <FieldValue />
        <FieldLabel $pad={3}><FieldIcon $w={26} $gap={10}><BarcodeIcon /></FieldIcon>Número de Serie:</FieldLabel>
        <FieldValue>90721</FieldValue>
        <FieldLabel $pad={3}><FieldIcon $w={28} $gap={9}><ContactIcon /></FieldIcon>Dirección:</FieldLabel>
        <FieldValue>Zona Franca, Santiago , Santiago de los Caballeros -</FieldValue>

        <Blank />
        <Blank />
        <FieldLabel $pad={3}><FieldIcon $w={26} $gap={10}><TankIcon w={20} h={26} /></FieldIcon>Número:</FieldLabel>
        <FieldValue $plain>1</FieldValue>
        <FieldLabel $pad={3}><FieldIcon $w={28} $gap={9}><PumpIcon /></FieldIcon>Producto/SGU:</FieldLabel>
        <FieldValue $plain>Diesel - 0.85000</FieldValue>
      </DetailPanel>

      <SectionBar $top={14} $h={29} $pad={16}>Mapa de la ubicación</SectionBar>
      <Body>
        <SidePanel>
          <ShowAll>
            <CheckBox>
              <svg width="13" height="13" viewBox="0 0 11 11" fill="none" stroke="#fff" strokeWidth="2"><path d="M1.5 6 4.5 9 9.5 1.5" /></svg>
            </CheckBox>
            Mostrar Todos lo Tanques
          </ShowAll>
          <InfoLine h={30} name="Eaton" lead={<GlobeIcon />} up={-8} />
          <InfoLine name={<Named>Número de Tanques</Named>} value="1" inset={10} />
          <InfoLine name={<Named># de Ubicación del Usuario</Named>} />
          <InfoLine name={<Named>Contacto Primario</Named>} value="A. Pimentel" inset={3} trail={<ContactIcon />} />
          <InfoLine h={44} push={5} name="Tanque Diesel Generador" value="907210390" lead={<ALetterPin />} center up={-8} />
          <InfoLine name={<Named>Hora de Inventario</Named>} value="21/05/2022 07:49:55 p. m." />
          <InfoLine name={<Named>Inventario (Bruto)</Named>} value="124.7 gal" />
          <InfoLine name={<Named>Capacidad Disponible</Named>} value="388.5 gal" />
          <InfoLine name={<Named>Producto</Named>} value="Diesel" trail={<GlobeIcon />} />
        </SidePanel>
        <MapBox>
          <MapArt />
          <MapTypeControl>
            <MapType $active $w={113}>Mapa</MapType>
            <MapType $w={136}>Satélite</MapType>
          </MapTypeControl>
          <MapButton $top={15} $h={57}>
            <svg width="27" height="26" viewBox="0 0 27 26" fill="none" stroke="#666" strokeWidth="3">
              <path d="M1.5 8V1.5H8.5M18.5 1.5H25.5V8M25.5 18V24.5H18.5M8.5 24.5H1.5V18" />
            </svg>
          </MapButton>
          <MapButton $top={465} $h={58}>
            <svg width="24" height="46" viewBox="0 0 24 46">
              <circle cx="12" cy="8" r="7.5" fill="#f0b429" />
              <path d="M5 16H19L23 33 19.5 34 18 28V44H13V33H11V44H6V28L4.5 34 1 33Z" fill="#f0b429" />
              <path d="M6 16 12 23 18 16" fill="none" stroke="#d9693a" strokeWidth="1.6" />
            </svg>
          </MapButton>
          <MapButton $top={570} $h={115}>
            <svg width="27" height="27" viewBox="0 0 27 27" fill="#666"><path d="M10.5 0H16.5V10.5H27V16.5H16.5V27H10.5V16.5H0V10.5H10.5Z" /></svg>
            <ZoomDivider />
            <svg width="27" height="27" viewBox="0 0 27 27" fill="#666"><path d="M0 10.5H27V16.5H0Z" /></svg>
          </MapButton>
          <Attribution>
            <AttrItem>Combinaciones de teclas</AttrItem>
            <AttrItem>Datos de mapas ©2022</AttrItem>
            <ScaleBar>50 m<ScaleLine /></ScaleBar>
            <AttrItem>Términos de uso</AttrItem>
            <AttrItem>Notificar un problema de Maps</AttrItem>
          </Attribution>
        </MapBox>
      </Body>
      <Footer />
    </Page>
  );
}
